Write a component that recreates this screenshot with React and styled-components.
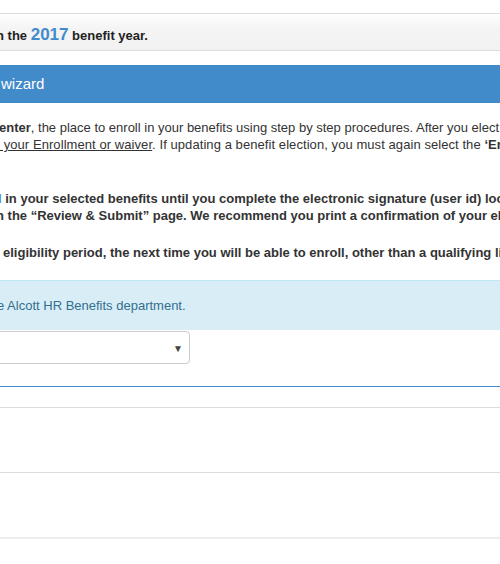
import React from "react";
import styled, { createGlobalStyle } from "styled-components";

const Global = createGlobalStyle`
  html, body { margin: 0; padding: 0; background: #fff; }
  body { font-family: "Liberation Sans", Arial, sans-serif; color: #333; overflow: hidden; }
`;

const Page = styled.div`
  width: 500px;
  height: 564px;
  overflow: hidden;
  display: flex;
  flex-direction: column;
`;

const YearBar = styled.div`
  margin-top: 13px;
  height: 38px;
  border-top: 1px solid #dcdcdc;
  border-bottom: 1px solid #dcdcdc;
  background: linear-gradient(#ffffff 0%, #f4f4f4 40%, #f2f2f2 100%);
  display: flex;
  align-items: center;
  font-size: 13px;
  font-weight: bold;
  color: #222;
  white-space: nowrap;
  padding-top: 5px;
  box-sizing: border-box;
`;

const Shifted = styled.span`
  display: inline-block;
  margin-left: ${(p) => p.$shift || 0}px;
`;

const Year = styled.span`
  color: #428bca;
  font-size: 17px;
`;

const WizardHeader = styled.div`
  margin-top: 14px;
  height: 38px;
  background: #428bca;
  color: #fff;
  font-size: 15px;
  display: flex;
  align-items: center;
  white-space: nowrap;
  padding-bottom: 1px;
  box-sizing: border-box;
`;

const Para = styled.div`
  margin-top: ${(p) => p.$top}px;
  font-size: 13px;
  line-height: 17px;
  font-weight: ${(p) => (p.$bold ? "bold" : "normal")};
  color: #333;
  white-space: nowrap;
`;

const Line = styled.div`
  margin-left: ${(p) => p.$shift || 0}px;
  letter-spacing: ${(p) => p.$ls || 0}px;
`;

const Under = styled.span`
  text-decoration: underline;
`;

const Blue = styled.span`
  color: #428bca;
`;

const InfoBox = styled.div`
  margin-top: 19px;
  height: 48px;
  background: #d9edf7;
  border-top: 1px solid #bce8f1;
  border-bottom: 1px solid #d6ebf4;
  color: #31708f;
  font-size: 13px;
  display: flex;
  align-items: center;
  white-space: nowrap;
  box-sizing: content-box;
`;

const SelectRow = styled.div`
  margin-top: 1px;
  display: flex;
`;

const SelectBox = styled.div`
  margin-left: -20px;
  width: 202px;
  height: 31px;
  border: 1px solid #ccc;
  border-radius: 4px;
  background: #fff;
  display: flex;
  align-items: center;
  justify-content: flex-end;
  padding-right: 6px;
  box-sizing: content-box;
`;

const Arrow = styled.span`
  font-size: 10px;
  color: #444;
  margin-top: 1px;
`;

const Rule = styled.div`
  flex: none;
  margin-top: ${(p) => p.$top}px;
  height: ${(p) => p.$h || 1}px;
  background: ${(p) => p.$color};
`;

export default function App() {
  return (
    <Page>
      <Global />
      <YearBar>
        <Shifted $shift={-4}>
          n the <Year>2017</Year> benefit year.
        </Shifted>
      </YearBar>
      <WizardHeader>
        <Shifted $shift={1}>wizard</Shifted>
      </WizardHeader>
      <Para $top={16}>
        <Line $shift={-1}>
          <b>enter</b>, the place to enroll in your benefits using step by step procedures. After you elect your benefits
        </Line>
        <Line $ls={0.07}>
          <Under>&nbsp;your Enrollment or waiver</Under>. If updating a benefit election, you must again select the <b>‘Enroll</b>
        </Line>
      </Para>
      <Para $top={37} $bold>
        <Line $shift={-2}>
          <Blue>l</Blue> in your selected benefits until you complete the electronic signature (user id) located
        </Line>
        <Line $shift={-4}>
          n the “Review &amp; Submit” page. We recommend you print a confirmation of your elections
        </Line>
      </Para>
      <Para $top={20} $bold>
        <Line $shift={3}>
          eligibility period, the next time you will be able to enroll, other than a qualifying life event
        </Line>
      </Para>
      <InfoBox>
        <Shifted $shift={-3}>e Alcott HR Benefits department.</Shifted>
      </InfoBox>
      <SelectRow>
        <SelectBox>
          <Arrow>▼</Arrow>
        </SelectBox>
      </SelectRow>
      <Rule $top={22} $color="#428bca" />
      <Rule $top={20} $color="#dcdcdc" />
      <Rule $top={64} $color="#dcdcdc" />
      <Rule $top={64} $h={2} $color="#eeeeee" />
    </Page>
  );
}
